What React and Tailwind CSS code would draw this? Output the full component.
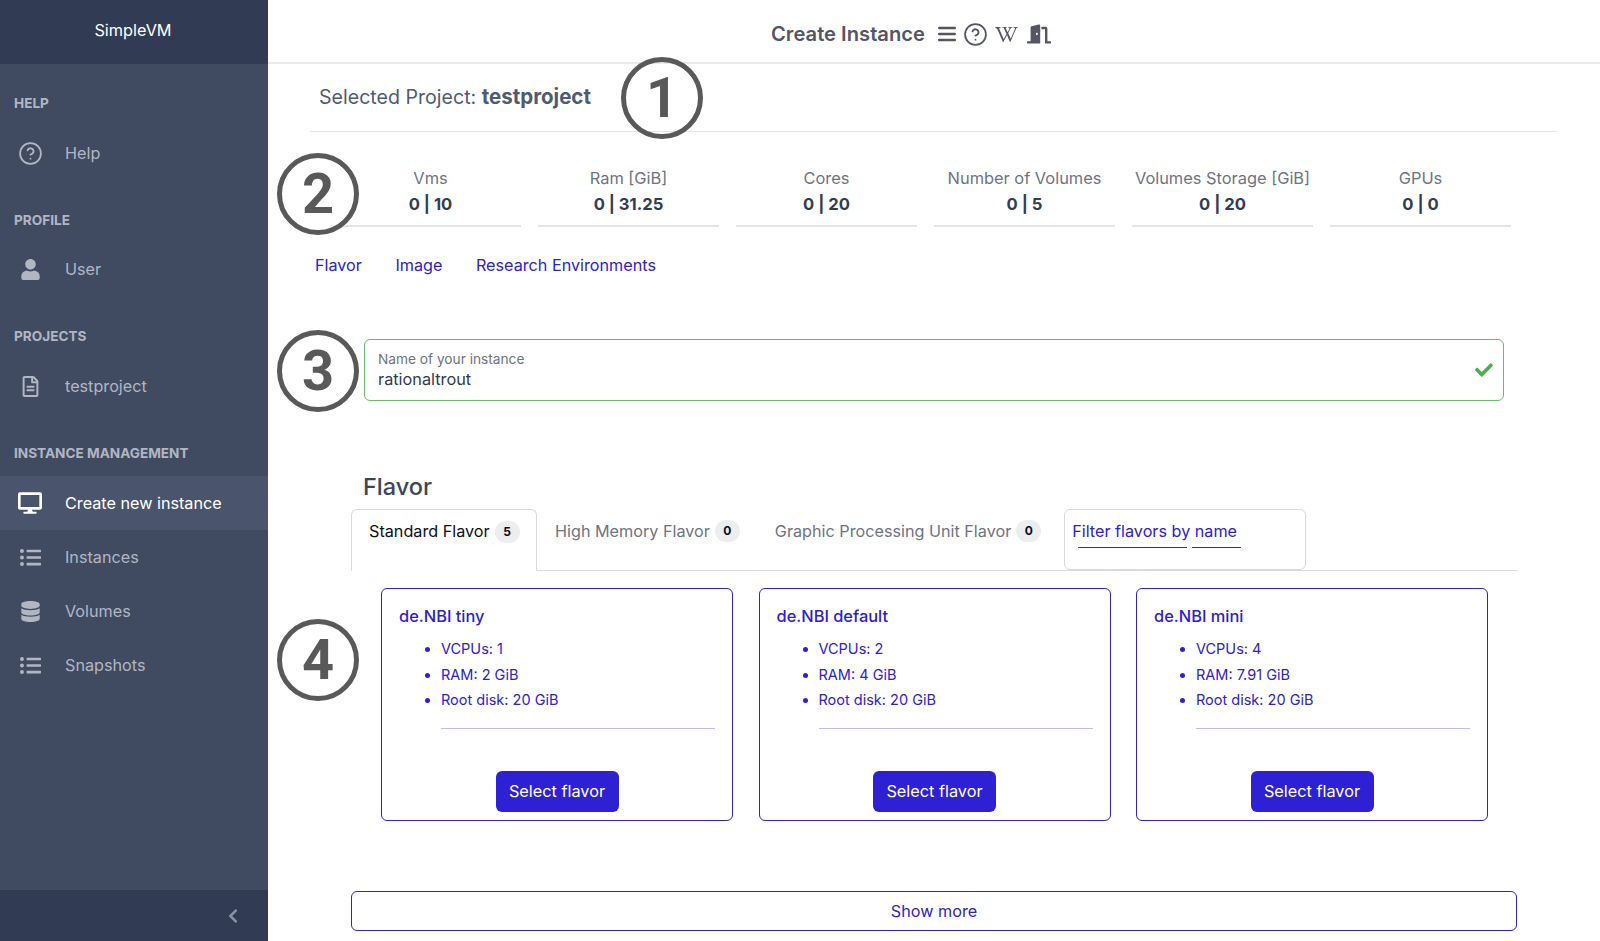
import {
  FaUser, FaRegFileAlt, FaDesktop, FaListUl, FaDatabase,
  FaChevronLeft, FaWikipediaW, FaDoorOpen, FaCheck,
} from 'react-icons/fa';
import { CircleHelp } from 'lucide-react';

const FONT = 'font-["Inter","Noto_Sans",sans-serif]';

const HelpIcon = ({ className }) => <CircleHelp className={className} strokeWidth={1.7} />;

const NAV = [
  { title: 'HELP', items: [{ label: 'Help', icon: HelpIcon, size: 'w-[25px] h-[25px]' }] },
  { title: 'PROFILE', items: [{ label: 'User', icon: FaUser, size: 'text-[21px]' }] },
  { title: 'PROJECTS', items: [{ label: 'testproject', icon: FaRegFileAlt, size: 'text-[21px]' }] },
  {
    title: 'INSTANCE MANAGEMENT',
    items: [
      { label: 'Create new instance', icon: FaDesktop, size: 'text-[24px]', active: true },
      { label: 'Instances', icon: FaListUl, size: 'text-[21px]' },
      { label: 'Volumes', icon: FaDatabase, size: 'text-[21px]' },
      { label: 'Snapshots', icon: FaListUl, size: 'text-[21px]' },
    ],
  },
];

const STATS = [
  ['Vms', '0 | 10'],
  ['Ram [GiB]', '0 | 31.25'],
  ['Cores', '0 | 20'],
  ['Number of Volumes', '0 | 5'],
  ['Volumes Storage [GiB]', '0 | 20'],
  ['GPUs', '0 | 0'],
];

const FLAVORS = [
  { name: 'de.NBI tiny', vcpus: 1, ram: '2 GiB' },
  { name: 'de.NBI default', vcpus: 2, ram: '4 GiB' },
  { name: 'de.NBI mini', vcpus: 4, ram: '7.91 GiB' },
];

function Sidebar() {
  return (
    <div className="w-[268px] shrink-0 flex flex-col bg-[#404b62]">
      <div className="h-[64px] shrink-0 flex items-center justify-center bg-[#323b54] text-white text-[16.3px] pb-[4px] pr-[2px]">
        SimpleVM
      </div>
      <div className="flex-1">
        {NAV.map((sec, i) => (
          <div key={sec.title} className="mt-4">
            <div className="h-[46.5px] pl-[14px] flex items-center text-[13.6px] font-bold text-[#b1b7c2]">
              {sec.title}
            </div>
            {sec.items.map(it => (
              <div key={it.label}
                className={`h-[54px] flex items-center text-[16.2px] ${i < 3 ? 'pb-[1px]' : ''} ${it.active ? 'bg-[#4a556d] text-white' : 'text-[#b1b7c2]'}`}>
                <span className="w-[65px] shrink-0 flex justify-center pr-[5px]">
                  <it.icon className={it.size} />
                </span>
                {it.label}
              </div>
            ))}
          </div>
        ))}
      </div>
      <div className="h-[51px] shrink-0 flex items-center justify-end pr-[27px] bg-[#323b54] text-[#8a92a3]">
        <FaChevronLeft className="text-[16px]" />
      </div>
    </div>
  );
}

function Badge({ n }) {
  return (
    <span className="ml-[5px] w-[25px] h-[22px] rounded-full bg-[#ebedef] text-[#0b0f1a] text-[12px] font-bold flex items-center justify-center">
      {n}
    </span>
  );
}

function FlavorCard({ f }) {
  return (
    <div className="w-[352px] h-[233px] flex flex-col border border-[#2e20d3] rounded-[6px] pt-[15px] px-[17px] pb-[8px] text-[#2e20d3]">
      <div className="text-[16.4px] font-medium leading-6">{f.name}</div>
      <ul className="list-disc pl-[42px] mt-[8px] text-[14.5px] leading-[25.5px]">
        <li>VCPUs: {f.vcpus}</li>
        <li>RAM: {f.ram}</li>
        <li>Root disk: 20 GiB</li>
      </ul>
      <div className="ml-[42px] mt-[15px] h-px bg-[#c0bcf2]" />
      <button className="mt-auto self-center w-[123px] h-[41px] rounded-[6px] bg-[#2e20d3] text-white text-[16.3px]">
        Select flavor
      </button>
    </div>
  );
}

function Marker({ n, className }) {
  return (
    <div className={`absolute w-[82px] h-[82px] rounded-full border-[5px] border-[#595959] flex items-center justify-center text-[#595959] text-[56px] font-bold font-['Roboto',sans-serif] ${className}`}>
      {n}
    </div>
  );
}

export default function App() {
  return (
    <div className={`relative flex h-[941px] overflow-hidden bg-white ${FONT}`}>
      <Sidebar />
      <div className="flex-1 min-w-0">
        {/* Header */}
        <div className="h-[64px] border-b-2 border-[#e9eaee] flex items-center justify-center gap-[9px] pr-[46px] pt-[6px] text-[#545663]">
          <span className="text-[20.2px] font-semibold mr-[4px]">Create Instance</span>
          <svg width="18" height="16" viewBox="0 0 18 16" stroke="currentColor" strokeWidth="2.4" strokeLinecap="round">
            <path d="M1.2 2h15.6M1.2 8h15.6M1.2 14h15.6" />
          </svg>
          <CircleHelp size={25} strokeWidth={1.7} className="-mx-[2px]" />
          <FaWikipediaW className="text-[23px]" />
          <FaDoorOpen className="text-[24px]" />
        </div>

        {/* Selected project */}
        <div className="ml-[42px] mr-[43px] h-[68px] border-b border-[#e3e5ec] pl-[9px] pt-[18px] text-[19.6px] leading-[30px] text-[#4f5b73]">
          Selected Project: <b className="font-bold text-[20.5px]">testproject</b>
        </div>

        {/* Stats */}
        <div className="mt-[34px] pl-[72px] flex gap-[17px]">
          {STATS.map(([label, val]) => (
            <div key={label} className="w-[181px] h-[61px] border-b-2 border-[#e3e5e8] text-center">
              <div className="text-[16.4px] leading-6 text-[#6d7383]">{label}</div>
              <div className="text-[16.6px] leading-[27px] font-bold text-[#333d52] mt-[1px]">{val}</div>
            </div>
          ))}
        </div>

        {/* Anchors */}
        <div className="mt-[26px] pl-[47px] flex gap-[33.5px] text-[16.2px] leading-6 text-[#2e20d3]">
          <span>Flavor</span>
          <span>Image</span>
          <span>Research Environments</span>
        </div>

        {/* Name input */}
        <div className="mt-[62px] ml-[96px] w-[1140px] h-[62px] border-[1.5px] border-[#69bd6d] rounded-[6px] pl-[13px] pr-[10px] flex items-center justify-between">
          <div className="pb-[3px]">
            <div className="text-[13.7px] leading-5 text-[#6d7383]">Name of your instance</div>
            <div className="text-[16.3px] leading-5 text-[#2f3a4f]">rationaltrout</div>
          </div>
          <FaCheck className="text-[18px] text-[#4caf50]" />
        </div>

        {/* Flavors */}
        <h2 className="mt-[70px] ml-[95px] text-[23.5px] leading-8 font-medium text-[#3c4658]">Flavor</h2>
        <div className="mt-[6px] ml-[83px] w-[1166px] h-[62px] border-b border-[#d9dadd] flex items-start text-[16.2px]">
          <div className="w-[186px] h-[62px] border border-b-0 border-[#d9dadd] rounded-t-[6px] bg-white pl-[17px] pb-[18px] flex items-center text-[#0b0f1a]">
            Standard Flavor <Badge n="5" />
          </div>
          <div className="pl-[18px] h-[44px] flex items-center text-[#6d7383]">
            High Memory Flavor <Badge n="0" />
          </div>
          <div className="pl-[35px] h-[44px] flex items-center text-[#6d7383]">
            Graphic Processing Unit Flavor <Badge n="0" />
          </div>
          <div className="ml-[23px] w-[242px] h-[61px] border border-[#d9dadd] rounded-[6px] pl-[7px] pt-[9px] leading-6 text-[#2e20d3]">
            Filter flavors by name
            <div className="flex gap-[5px] pl-[6px] mt-[4px]">
              <span className="w-[109px] h-px bg-[#2e20d3]" />
              <span className="w-[49px] h-px bg-[#2e20d3]" />
            </div>
          </div>
        </div>

        <div className="mt-[17px] ml-[113px] flex gap-[25.5px]">
          {FLAVORS.map(f => <FlavorCard key={f.name} f={f} />)}
        </div>

        <button className="mt-[70px] ml-[83px] w-[1166px] h-[40px] border border-[#2e20d3] rounded-[6px] text-[16.2px] text-[#2e20d3]">
          Show more
        </button>
      </div>

      <Marker n="1" className="left-[621px] top-[57px]" />
      <Marker n="2" className="left-[277px] top-[153px]" />
      <Marker n="3" className="left-[277px] top-[330px]" />
      <Marker n="4" className="left-[277px] top-[619px]" />
    </div>
  );
}
